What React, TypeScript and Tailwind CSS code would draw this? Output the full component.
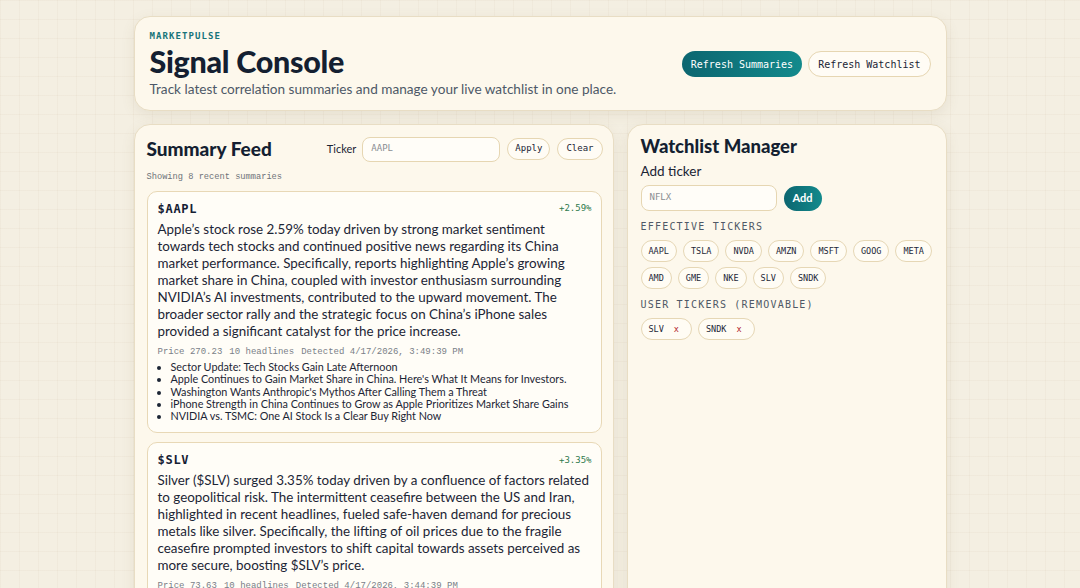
import React from "react";

const mono = { fontFamily: '"DejaVu Sans Mono", "Liberation Mono", monospace' };
const lmono = { fontFamily: '"Liberation Mono", "DejaVu Sans Mono", monospace' };

const effective = ["AAPL", "TSLA", "NVDA", "AMZN", "MSFT", "GOOG", "META", "AMD", "GME", "NKE", "SLV", "SNDK"];
const userTickers = ["SLV", "SNDK"];

type Summary = {
  ticker: string;
  change: string;
  body: string;
  price: string;
  headlines: number;
  detected: string;
  items: string[];
};

const summaries: Summary[] = [
  {
    ticker: "$AAPL",
    change: "+2.59%",
    body:
      "Apple\u2019s stock rose 2.59% today driven by strong market sentiment towards tech stocks and continued positive news regarding its China market performance. Specifically, reports highlighting Apple\u2019s growing market share in China, coupled with investor enthusiasm surrounding NVIDIA\u2019s AI investments, contributed to the upward movement. The broader sector rally and the strategic focus on China\u2019s iPhone sales provided a significant catalyst for the price increase.",
    price: "270.23",
    headlines: 10,
    detected: "4/17/2026, 3:49:39 PM",
    items: [
      "Sector Update: Tech Stocks Gain Late Afternoon",
      "Apple Continues to Gain Market Share in China. Here's What It Means for Investors.",
      "Washington Wants Anthropic's Mythos After Calling Them a Threat",
      "iPhone Strength in China Continues to Grow as Apple Prioritizes Market Share Gains",
      "NVIDIA vs. TSMC: One AI Stock Is a Clear Buy Right Now",
    ],
  },
  {
    ticker: "$SLV",
    change: "+3.35%",
    body:
      "Silver ($SLV) surged 3.35% today driven by a confluence of factors related to geopolitical risk. The intermittent ceasefire between the US and Iran, highlighted in recent headlines, fueled safe-haven demand for precious metals like silver. Specifically, the lifting of oil prices due to the fragile ceasefire prompted investors to shift capital towards assets perceived as more secure, boosting $SLV\u2019s price.",
    price: "73.63",
    headlines: 10,
    detected: "4/17/2026, 3:44:39 PM",
    items: [
      "Silver Prices Climb as Ceasefire Headlines Shake Markets",
      "Precious Metals Rally on Safe-Haven Demand",
    ],
  },
];

function SummaryCard({ s }: { s: Summary }) {
  return (
    <div className="rounded-[10px] border border-[#e8d8b6] bg-[#fffdf7] pl-[10px] pr-[9px] pt-[9px] pb-[10px]">
      <div className="flex items-center justify-between">
        <span className="text-[12px] leading-[16px] font-bold tracking-[0.06em] text-[#152033]" style={mono}>
          {s.ticker}
        </span>
        <span className="text-[9px] text-[#2f7a4d]" style={mono}>
          {s.change}
        </span>
      </div>
      <p className="mt-[4px] text-[13.4px] leading-[17px] text-[#1c2535]">{s.body}</p>
      <div className="mt-[6px] flex gap-[7px] text-[9px] leading-[12px] text-[#7a7f87]" style={lmono}>
        <span>Price {s.price}</span>
        <span>{s.headlines} headlines</span>
        <span>Detected {s.detected}</span>
      </div>
      <ul className="mt-[3px] list-disc pl-[13px] text-[10.8px] leading-[12.3px] text-[#1c2535]">
        {s.items.map((h) => (
          <li key={h}>{h}</li>
        ))}
      </ul>
    </div>
  );
}

function Chip({ label, removable }: { label: string; removable?: boolean }) {
  return (
    <span
      className={
        removable
          ? "inline-flex h-[22px] items-center gap-[10px] rounded-full border border-[#e6d7b5] bg-[#fffcf4] pl-[7px] pr-[12px] text-[8.5px] text-[#1e2838]"
          : "inline-flex h-[22px] items-center rounded-full border border-[#e6d7b5] bg-[#fffcf4] px-[7px] text-[8.5px] text-[#1e2838]"
      }
      style={mono}
    >
      {label}
      {removable && <span className="text-[#b3262b]">x</span>}
    </span>
  );
}

export default function App() {
  return (
    <div
      className="min-h-[588px] w-full bg-[#f4efe2] pt-[16px] pb-[20px]"
      style={{
        fontFamily: 'Lato, "Noto Sans", sans-serif',
        backgroundImage:
          "linear-gradient(to right, rgba(200,185,150,0.09) 1px, transparent 1px), linear-gradient(to bottom, rgba(200,185,150,0.09) 1px, transparent 1px)",
        backgroundSize: "19px 19px",
      }}
    >
      <div className="mx-auto flex w-[813px] flex-col gap-[13px]">
        <header className="flex items-center justify-between rounded-[16px] border border-[#e8ddc4] bg-[#fdf8ec] px-[15px] pt-[13px] pb-[12px] shadow-[0_4px_14px_rgba(120,100,60,0.10)]">
          <div>
            <div className="text-[9px] leading-[12px] font-bold tracking-[0.12em] text-[#17747a]" style={mono}>
              MARKETPULSE
            </div>
            <h1 className="mt-[3px] text-[30.5px] leading-[32px] font-black tracking-[-0.01em] text-[#141f31]">
              Signal Console
            </h1>
            <p className="mt-[3px] text-[13.6px] leading-[18px] text-[#4d5867]">
              Track latest correlation summaries and manage your live watchlist in one place.
            </p>
          </div>
          <div className="flex gap-[6px]">
            <button
              className="h-[26px] rounded-full bg-gradient-to-r from-[#0c6670] to-[#138a8c] px-[9px] text-[10px] text-white"
              style={mono}
            >
              Refresh Summaries
            </button>
            <button
              className="h-[26px] rounded-full border border-[#e6d6b2] bg-[#fffcf5] px-[9px] text-[10px] text-[#1a2434]"
              style={mono}
            >
              Refresh Watchlist
            </button>
          </div>
        </header>

        <div className="grid grid-cols-[3fr_2fr] gap-[13px]">
          <section className="rounded-[16px] border border-[#e8ddc4] bg-[#fdf8ec] pl-[12px] pr-[10px] pt-[11px] pb-[12px] shadow-[0_4px_14px_rgba(120,100,60,0.10)]">
            <div className="flex items-center justify-between">
              <h2 className="text-[19px] leading-[26px] font-black text-[#141f31]">Summary Feed</h2>
              <div className="flex items-center">
                <span className="mr-[6px] text-[11px] text-[#1a2434]">Ticker</span>
                <div
                  className="flex h-[25px] w-[138px] items-center rounded-[8px] border border-[#e6d6b2] bg-[#fffdf8] px-[8px] text-[9px] text-[#8a8d92]"
                  style={mono}
                >
                  AAPL
                </div>
                <button
                  className="ml-[7px] h-[22px] rounded-full border border-[#e6d6b2] bg-[#fffcf5] px-[7px] text-[9px] text-[#1a2434]"
                  style={mono}
                >
                  Apply
                </button>
                <button
                  className="ml-[7px] h-[22px] rounded-full border border-[#e6d6b2] bg-[#fffcf5] px-[8px] text-[9px] text-[#1a2434]"
                  style={mono}
                >
                  Clear
                </button>
              </div>
            </div>
            <div className="mt-[9px] text-[8.7px] leading-[12px] text-[#6e7379]" style={lmono}>
              Showing 8 recent summaries
            </div>
            <div className="mt-[8px] mr-[1px] flex flex-col gap-[9px]">
              {summaries.map((s) => (
                <SummaryCard key={s.ticker} s={s} />
              ))}
            </div>
          </section>

          <section className="self-start rounded-[16px] border border-[#e8ddc4] bg-[#fdf8ec] px-[13px] pt-[8px] pb-[300px] shadow-[0_4px_14px_rgba(120,100,60,0.10)]">
            <h2 className="text-[18.5px] leading-[26px] font-black text-[#141f31]">Watchlist Manager</h2>
            <div className="mt-[3px] text-[13.5px] leading-[18px] text-[#1a2434]">Add ticker</div>
            <div className="mt-[5px] flex items-center gap-[7px]">
              <div
                className="flex h-[26px] w-[136px] items-center rounded-[8px] border border-[#e6d6b2] bg-[#fffdf8] px-[8px] text-[9px] text-[#8a8d92]"
                style={mono}
              >
                NFLX
              </div>
              <button className="h-[25px] rounded-full bg-gradient-to-r from-[#0c6670] to-[#138a8c] px-[9px] text-[11px] font-bold text-white">
                Add
              </button>
            </div>
            <div className="mt-[9px] text-[10px] leading-[14px] tracking-[0.12em] text-[#4f5866]" style={mono}>
              EFFECTIVE TICKERS
            </div>
            <div className="mt-[6px] flex flex-wrap gap-x-[6px] gap-y-[5px]">
              {effective.map((t) => (
                <Chip key={t} label={t} />
              ))}
            </div>
            <div className="mt-[9px] text-[10px] leading-[14px] tracking-[0.12em] text-[#4f5866]" style={mono}>
              USER TICKERS (REMOVABLE)
            </div>
            <div className="mt-[6px] flex flex-wrap gap-[6px]">
              {userTickers.map((t) => (
                <Chip key={t} label={t} removable />
              ))}
            </div>
          </section>
        </div>
      </div>
    </div>
  );
}
